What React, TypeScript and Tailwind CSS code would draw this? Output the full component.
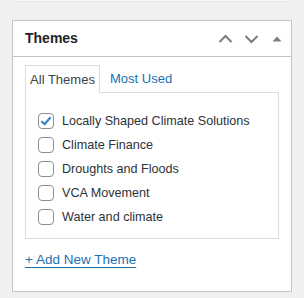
const themes = [
  { name: "Locally Shaped Climate Solutions", checked: true },
  { name: "Climate Finance", checked: false },
  { name: "Droughts and Floods", checked: false },
  { name: "VCA Movement", checked: false },
  { name: "Water and climate", checked: false },
];

const Checkbox = ({ checked }: { checked: boolean }) => (
  <span className="flex h-4 w-4 shrink-0 items-center justify-center rounded-[4px] border border-[#8c8f94] bg-white">
    {checked && (
      <svg width="14" height="14" viewBox="0 0 14 14">
        <path
          d="M2.5 7.2 L5.6 10.2 L11.6 3.2"
          fill="none"
          stroke="#3582c4"
          strokeWidth="2.2"
        />
      </svg>
    )}
  </span>
);

export default function App() {
  return (
    <div
      className="h-[298px] w-[304px] bg-[#f0f0f1]"
      style={{ fontFamily: '"Liberation Sans", Arial, sans-serif' }}
    >
      <div className="ml-[13px] h-[2px] w-[278px] border-b border-[#e4e4e6] bg-[#f6f6f7]" />

      <div className="ml-3 mt-[18px] w-[280px] border border-[#c3c4c7] bg-white">
        <div className="flex h-9 items-center justify-between border-b border-[#c3c4c7] pl-3 pr-2">
          <h2 className="text-[14px] font-semibold text-[#1d2327]">Themes</h2>
          <div className="flex items-center text-[#787c82]">
            <svg width="16" height="10" viewBox="0 0 16 10" className="mr-[10px]">
              <path d="M1.5 8 L7.5 2 L13.5 8" fill="none" stroke="currentColor" strokeWidth="2" />
            </svg>
            <svg width="16" height="10" viewBox="0 0 16 10" className="mr-[12px]">
              <path d="M1.5 2 L7.5 8 L13.5 2" fill="none" stroke="currentColor" strokeWidth="2" />
            </svg>
            <svg width="10" height="6" viewBox="0 0 10 6" className="mr-[1px]">
              <path d="M0.5 5.5 L5 0.5 L9.5 5.5 Z" fill="currentColor" />
            </svg>
          </div>
        </div>

        <div className="px-3 pb-[20px] pt-2">
          <div className="flex items-end text-[13px]">
            <div className="-mb-px flex h-[28px] w-[75px] items-center justify-center border border-b-0 border-[#dcdcde] bg-white text-[#3c434a]">
              All Themes
            </div>
            <div className="flex h-[27px] items-center pl-[10px] text-[#2271b1]">Most Used</div>
          </div>

          <div className="h-[147px] w-[254px] border border-[#dcdcde] pl-3 pt-[16px]">
            {themes.map((t) => (
              <label key={t.name} className="flex h-6 items-center gap-2 text-[12.6px] text-[#2c3338]">
                <Checkbox checked={t.checked} />
                <span>{t.name}</span>
              </label>
            ))}
          </div>

          <a
            href="#"
            className="mt-[11px] inline-block text-[13.5px] text-[#2271b1] underline underline-offset-[3px]"
          >
            + Add New Theme
          </a>
        </div>
      </div>
    </div>
  );
}
